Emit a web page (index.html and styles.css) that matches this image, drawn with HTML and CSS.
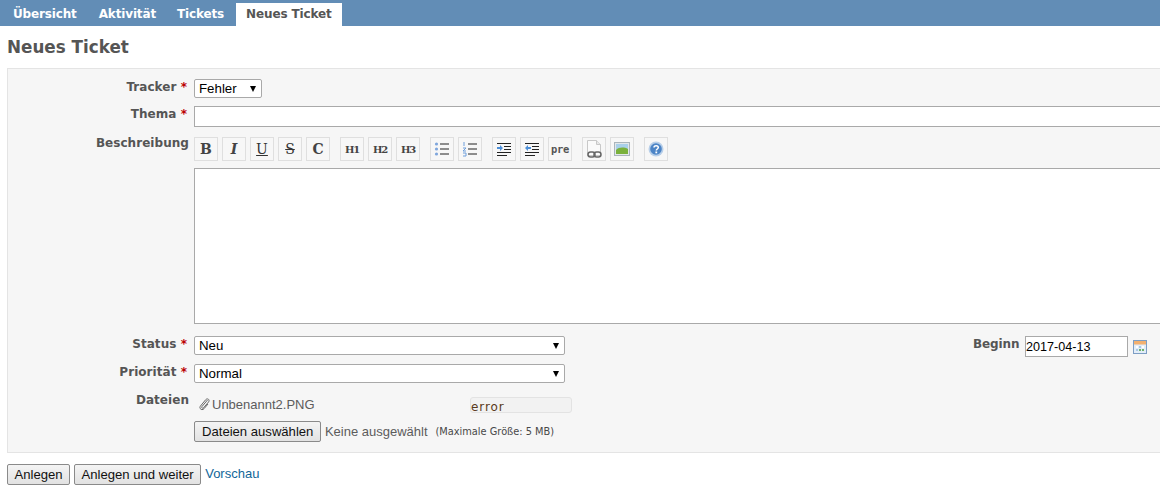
FILE: index.html
```html
<!DOCTYPE html>
<html lang="de">
<head>
<meta charset="utf-8">
<title>Neues Ticket</title>
<link rel="stylesheet" href="styles.css">
</head>
<body>
<nav class="tabs">
  <a class="tab">Übersicht</a>
  <a class="tab">Aktivität</a>
  <a class="tab">Tickets</a>
  <a class="tab active">Neues Ticket</a>
</nav>
<main class="content">
  <h2 class="title">Neues Ticket</h2>
  <form class="box">
    <div class="row row-tracker">
      <label class="lbl">Tracker <span class="req">*</span></label>
      <div class="sel sel-tracker">Fehler<span class="arrow"></span></div>
    </div>
    <div class="row row-subject">
      <label class="lbl">Thema <span class="req">*</span></label>
      <div class="text-input"></div>
    </div>
    <div class="row row-desc">
      <label class="lbl lbl-desc">Beschreibung</label>
      <div class="editor">
        <div class="toolbar">
          <div class="tgroup">
            <span class="tb tb-serif tb-big">B</span>
            <span class="tb tb-serif tb-big tb-i">I</span>
            <span class="tb tb-serif tb-big tb-u">U</span>
            <span class="tb tb-serif tb-big tb-s">S</span>
            <span class="tb tb-serif tb-big">C</span>
          </div>
          <div class="tgroup">
            <span class="tb tb-serif">H1</span>
            <span class="tb tb-serif">H2</span>
            <span class="tb tb-serif">H3</span>
          </div>
          <div class="tgroup">
            <span class="tb"><svg width="16" height="16" viewBox="0 0 16 16"><g fill="#7fa6dc"><circle cx="2.5" cy="3" r="1.6"/><circle cx="2.5" cy="8" r="1.6"/><circle cx="2.5" cy="13" r="1.6"/></g><g stroke="#222"><path d="M6 3h9M6 8h9M6 13h9"/></g></svg></span>
            <span class="tb"><svg width="16" height="16" viewBox="0 0 16 16"><g stroke="#6f9fdc" fill="none"><path d="M2 1v4M1 7h3l-3 3h3M1 12h3v3H1"/></g><g stroke="#222"><path d="M6 3h9M6 8h9M6 13h9"/></g></svg></span>
          </div>
          <div class="tgroup">
            <span class="tb"><svg width="16" height="14" viewBox="0 0 16 14"><path stroke="#222" d="M1 1.500h14M8 4.500h7M8 7.500h7M1 10.500h14M1 13.500h10"/><path fill="#4d8fd8" d="M1 5h3V3l3 3-3 3V7H1z"/></svg></span>
            <span class="tb"><svg width="16" height="14" viewBox="0 0 16 14"><path stroke="#222" d="M1 1.500h14M8 4.500h7M8 7.500h7M1 10.500h14M1 13.500h10"/><path fill="#4d8fd8" d="M7 5H4V3L1 6l3 3V7h3z"/></svg></span>
            <span class="tb tb-pre">pre</span>
          </div>
          <div class="tgroup">
            <span class="tb"><svg width="18" height="18" viewBox="0 0 18 18"><path d="M2.500.5h9l4 4v11h-13z" fill="#fafafa" stroke="#c8c8c8"/><path d="M11.500.5v4h4" fill="#e8e8e8" stroke="#c8c8c8"/><g fill="none" stroke="#666" stroke-width="1.500"><rect x="3" y="12" width="7" height="5" rx="2.500"/><rect x="9" y="12" width="7" height="5" rx="2.500"/></g></svg></span>
            <span class="tb"><svg width="16" height="14" viewBox="0 0 16 14"><rect x=".5" y=".5" width="15" height="13" fill="#e2e7ea" stroke="#a9b4bb"/><rect x="2" y="2" width="12" height="10" fill="#a9d0ea"/><path d="M2 8c3-3 8-3 12-1v5H2z" fill="#7ab13c"/></svg></span>
          </div>
          <div class="tgroup">
            <span class="tb"><svg width="16" height="16" viewBox="0 0 16 16"><circle cx="8" cy="8" r="7.500" fill="#b8cfe9"/><circle cx="8" cy="8" r="5.800" fill="#4c84c6"/><path d="M6 6.500c0-2.500 4.300-2.500 4.300 0 0 1.500-2 1.500-2 3" fill="none" stroke="#fff" stroke-width="1.500"/><rect x="7.400" y="10.500" width="1.800" height="1.800" fill="#fff"/></svg></span>
          </div>
        </div>
        <div class="textarea"></div>
      </div>
    </div>
    <div class="row row-attrs">
      <div class="col-left">
        <div class="row row-status">
          <label class="lbl">Status <span class="req">*</span></label>
          <div class="sel sel-wide">Neu<span class="arrow"></span></div>
        </div>
        <div class="row row-prio">
          <label class="lbl">Priorität <span class="req">*</span></label>
          <div class="sel sel-wide">Normal<span class="arrow"></span></div>
        </div>
      </div>
      <div class="col-right">
        <label class="lbl-begin">Beginn</label>
        <div class="date-input">2017-04-13</div>
        <svg class="cal" width="14" height="14" viewBox="0 0 14 14"><rect x=".5" y=".5" width="13" height="13" fill="#e3edf8" stroke="#7d9ec4"/><rect x="1" y="1" width="12" height="3.500" fill="#f2b070"/><path d="M3 6h2v2H3zM9 6h2v2H9z" fill="#fff"/><path d="M6 6h2v2H6zM3 9h2v2H3z" fill="#a9c8e8"/><path d="M6 9h2v2H6zM9 9h2v2H9z" fill="#6fb36b"/></svg>
      </div>
    </div>
    <div class="row row-files">
      <label class="lbl">Dateien</label>
      <div class="files">
        <div class="file-line">
          <svg class="clip" width="12" height="14" viewBox="0 0 12 14"><path d="M9.500 3L4 9.500c-1 1.200.6 2.400 1.600 1.300L10.500 5c1.800-2.200-1-4.300-2.800-2.300L2.500 9c-2 2.500 1.500 5 3.500 2.700L10 7" fill="none" stroke="#666" stroke-width="1"/></svg>
          <span class="filename">Unbenannt2.PNG</span>
          <span class="progress">error</span>
        </div>
        <div class="file-line2">
          <span class="btn btn-file">Dateien auswählen</span>
          <span class="nofile">Keine ausgewählt</span>
          <span class="maxsize">(Maximale Größe: 5 MB)</span>
        </div>
      </div>
    </div>
  </form>
  <div class="actions">
    <span class="btn btn-action">Anlegen</span>
    <span class="btn btn-action">Anlegen und weiter</span>
    <a class="preview">Vorschau</a>
  </div>
</main>
</body>
</html>
```
FILE: styles.css
```css
* { box-sizing: border-box; }
html, body { margin: 0; padding: 0; width: 1160px; height: 493px; overflow: hidden; background: #fff; }
body { font-family: "DejaVu Sans", Verdana, sans-serif; font-size: 12px; color: #484848; }

.tabs { display: flex; align-items: flex-end; height: 26px; background: #628db6; padding-left: 3px; }
.tab { height: 23px; padding: 0 10px; margin-right: 1px; line-height: 23px; font-size: 12px; font-weight: 700; color: #fff; letter-spacing: -0.15px; }
.tab:nth-child(2) { margin-left: 1px; }
.tab.active { background: #fff; color: #555; margin-left: 1px; letter-spacing: -0.12px; }

.content { padding: 0 0 0 7px; }
.title { margin: 0; padding-top: 11px; height: 42px; font-size: 16.800px; line-height: 20px; font-weight: 700; color: #555; letter-spacing: 0; }

.box { width: 1153px; height: 385px; background: #f6f6f6; border: 1px solid #e4e4e4; border-right: 0; padding-top: 10px; }
.row { display: flex; align-items: flex-start; }
.lbl { width: 181px; text-align: right; font-size: 12px; line-height: 16px; font-weight: 700; color: #555; margin-right: 5px; letter-spacing: 0.05px; flex: none; }
.req { color: #bb0000; margin-right: 2px; }

.sel { position: relative; height: 19px; background: #fff; border: 1px solid #a9a9a9; border-radius: 2px; font-family: "Liberation Sans", Arial, sans-serif; font-size: 13.300px; line-height: 18px; color: #000; padding-left: 4px; }
.arrow { position: absolute; right: 5px; top: 6px; width: 0; height: 0; border-left: 3.500px solid transparent; border-right: 3.500px solid transparent; border-top: 6px solid #000; }
.sel-tracker { width: 68px; }
.sel-wide { width: 371px; }

.row-subject { margin-top: 8px; }
.text-input { flex: 1; height: 21px; background: #fff; border: 1px solid #a9a9a9; border-right: 0; }

.row-desc { margin-top: 9px; }
.lbl-desc { margin-top: -1px; }
.editor { flex: 1; padding-top: 1px; }
.toolbar { display: flex; gap: 10px; height: 24px; }
.tgroup { display: flex; gap: 4px; }
.tb { display: flex; align-items: center; justify-content: center; width: 24px; height: 24px; border: 1px solid #dfdfdf; background: #f7f7f7; color: #444; flex: none; overflow: hidden; }
.tb-serif { font-family: "DejaVu Serif", "Liberation Serif", serif; font-weight: 700; font-size: 10px; letter-spacing: -1.100px; }
.tb-big { font-size: 14px; letter-spacing: 0; }
.tb-i { font-style: italic; }
.tb-u { text-decoration: underline; font-weight: 400; color: #333; }
.tb-s { text-decoration: line-through; font-weight: 400; color: #333; }
.tb-pre { font-family: "DejaVu Sans Mono", monospace; font-size: 10.500px; font-weight: 700; color: #555; letter-spacing: -0.3px; }
.textarea { height: 156px; margin-top: 7px; background: #fff; border: 1px solid #a9a9a9; border-right: 0; }

.row-attrs { margin-top: 12px; }
.col-left { width: 779px; flex: none; }
.row-prio { margin-top: 9px; }
.col-right { display: flex; align-items: flex-start; margin-left: 186px; }
.lbl-begin { width: 52px; font-size: 12px; font-weight: 700; line-height: 16px; color: #555; letter-spacing: -0.1px; flex: none; }
.date-input { width: 103px; height: 21px; background: #fff; border: 1px solid #a9a9a9; font-family: "Liberation Sans", Arial, sans-serif; font-size: 12.600px; line-height: 20px; color: #000; padding-left: 0; }
.cal { margin: 4px 0 0 5px; flex: none; }

.row-files { margin-top: 9px; }
.files { display: flex; flex-direction: column; }
.file-line { display: flex; align-items: center; height: 18px; margin-top: 3px; }
.clip { margin-left: 4px; margin-right: 2px; }
.filename { width: 258px; font-family: "Liberation Sans", Arial, sans-serif; font-size: 13px; color: #5c5c5c; }
.progress { width: 102px; height: 16px; margin-top: 2px; background: #f2f2f2; border: 1px solid #e3e3e3; border-radius: 3px; font-size: 12px; line-height: 18px; color: #5a3a20; letter-spacing: 0.900px; }
.file-line2 { display: flex; align-items: center; margin-top: 8px; height: 21px; }
.btn { display: inline-block; height: 21px; line-height: 19px; padding: 0 7px; background: linear-gradient(#f4f4f4, #e2e2e2); border: 1px solid #8a8a8a; border-radius: 2px; font-family: "Liberation Sans", Arial, sans-serif; font-size: 13.100px; color: #111; }
.btn-action { padding: 0 6.500px; }
.nofile { margin-left: 3.500px; font-family: "Liberation Sans", Arial, sans-serif; font-size: 13px; color: #5c5c5c; }
.maxsize { margin-left: 8px; font-size: 9.800px; color: #484848; }

.actions { display: flex; align-items: flex-start; gap: 4px; margin-top: 11px; }
.preview { font-family: "Liberation Sans", Arial, sans-serif; font-size: 13px; line-height: 20px; color: #169; }
```
